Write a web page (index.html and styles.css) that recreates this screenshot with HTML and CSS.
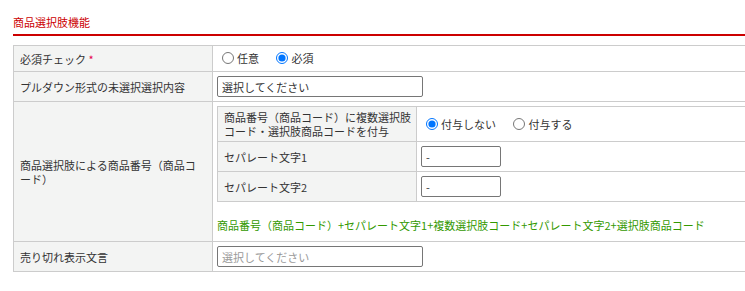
FILE: index.html
```html
<!DOCTYPE html>
<html lang="ja">
<head>
  <meta charset="UTF-8">
  <title>商品選択肢機能</title>
  <link rel="stylesheet" href="styles.css">
</head>
<body>
  <div class="page">
    <h2 class="section-title">商品選択肢機能</h2>
    <table class="form-table">
      <tr class="row-required">
        <th>必須チェック <span class="req">*</span></th>
        <td>
          <label class="radio"><input type="radio" name="required"> 任意</label>
          <label class="radio"><input type="radio" name="required" checked> 必須</label>
        </td>
      </tr>
      <tr class="row-input">
        <th>プルダウン形式の未選択選択内容</th>
        <td><input type="text" class="text-wide" value="選択してください"></td>
      </tr>
      <tr>
        <th>商品選択肢による商品番号（商品コード）</th>
        <td class="nested-cell">
          <table class="sub-table">
            <tr class="sub-first">
              <th>商品番号（商品コード）に複数選択肢コード・選択肢商品コードを付与</th>
              <td>
                <label class="radio"><input type="radio" name="attach" checked> 付与しない</label>
                <label class="radio"><input type="radio" name="attach"> 付与する</label>
              </td>
            </tr>
            <tr>
              <th>セパレート文字1</th>
              <td><input type="text" class="text-short" value="-"></td>
            </tr>
            <tr>
              <th>セパレート文字2</th>
              <td><input type="text" class="text-short" value="-"></td>
            </tr>
          </table>
          <p class="code-note">商品番号（商品コード）+セパレート文字1+複数選択肢コード+セパレート文字2+選択肢商品コード</p>
        </td>
      </tr>
      <tr class="row-input">
        <th>売り切れ表示文言</th>
        <td><input type="text" class="text-wide" placeholder="選択してください"></td>
      </tr>
    </table>
  </div>
</body>
</html>
```

FILE: styles.css
```css
html, body {
  margin: 0;
  padding: 0;
  overflow: hidden;
  background: #fff;
}

body {
  font-family: "Noto Sans CJK JP", "Noto Sans", sans-serif;
  font-size: 11px;
  line-height: 14px;
  color: #333;
}

.page {
  padding: 13px 0 0 13px;
  width: 800px;
}

.section-title {
  margin: 0 0 9px;
  padding: 2px 0 5px;
  font-size: 11px;
  line-height: 14px;
  font-weight: normal;
  color: #cc0000;
  border-bottom: 2px solid #cc0000;
}

.form-table,
.sub-table {
  width: 100%;
  border-collapse: collapse;
}

.form-table th,
.form-table td {
  border: 1px solid #ccc;
  padding: 4px 4px;
  text-align: left;
  vertical-align: middle;
  font-weight: normal;
}

.form-table th {
  width: 184px;
  padding: 4px 8px 4px 6px;
  background: #f3f4f3;
}

.row-required th,
.row-required td {
  padding-top: 5px;
  padding-bottom: 5px;
}

.req {
  color: #e6004c;
}

.radio {
  display: inline-flex;
  align-items: center;
  margin-right: 10px;
}

.radio input {
  width: 12px;
  height: 12px;
  margin: 0 3px 0 5px;
}

input[type="text"] {
  box-sizing: border-box;
  height: 21px;
  padding: 1px 4px;
  border: 1px solid #767676;
  border-radius: 2px;
  font-family: inherit;
  font-size: 11px;
  color: #333;
}

input::placeholder {
  color: #999;
}

.text-wide {
  width: 206px;
}

.text-short {
  width: 80px;
}

.form-table .nested-cell {
  padding: 4px 0 9px 4px;
}

.form-table .sub-table th {
  width: 190px;
  padding-right: 2px;
}

.sub-first th {
  padding-top: 3px;
  padding-bottom: 3px;
}

.code-note {
  margin: 16px 0 0;
  color: #339900;
}
```
